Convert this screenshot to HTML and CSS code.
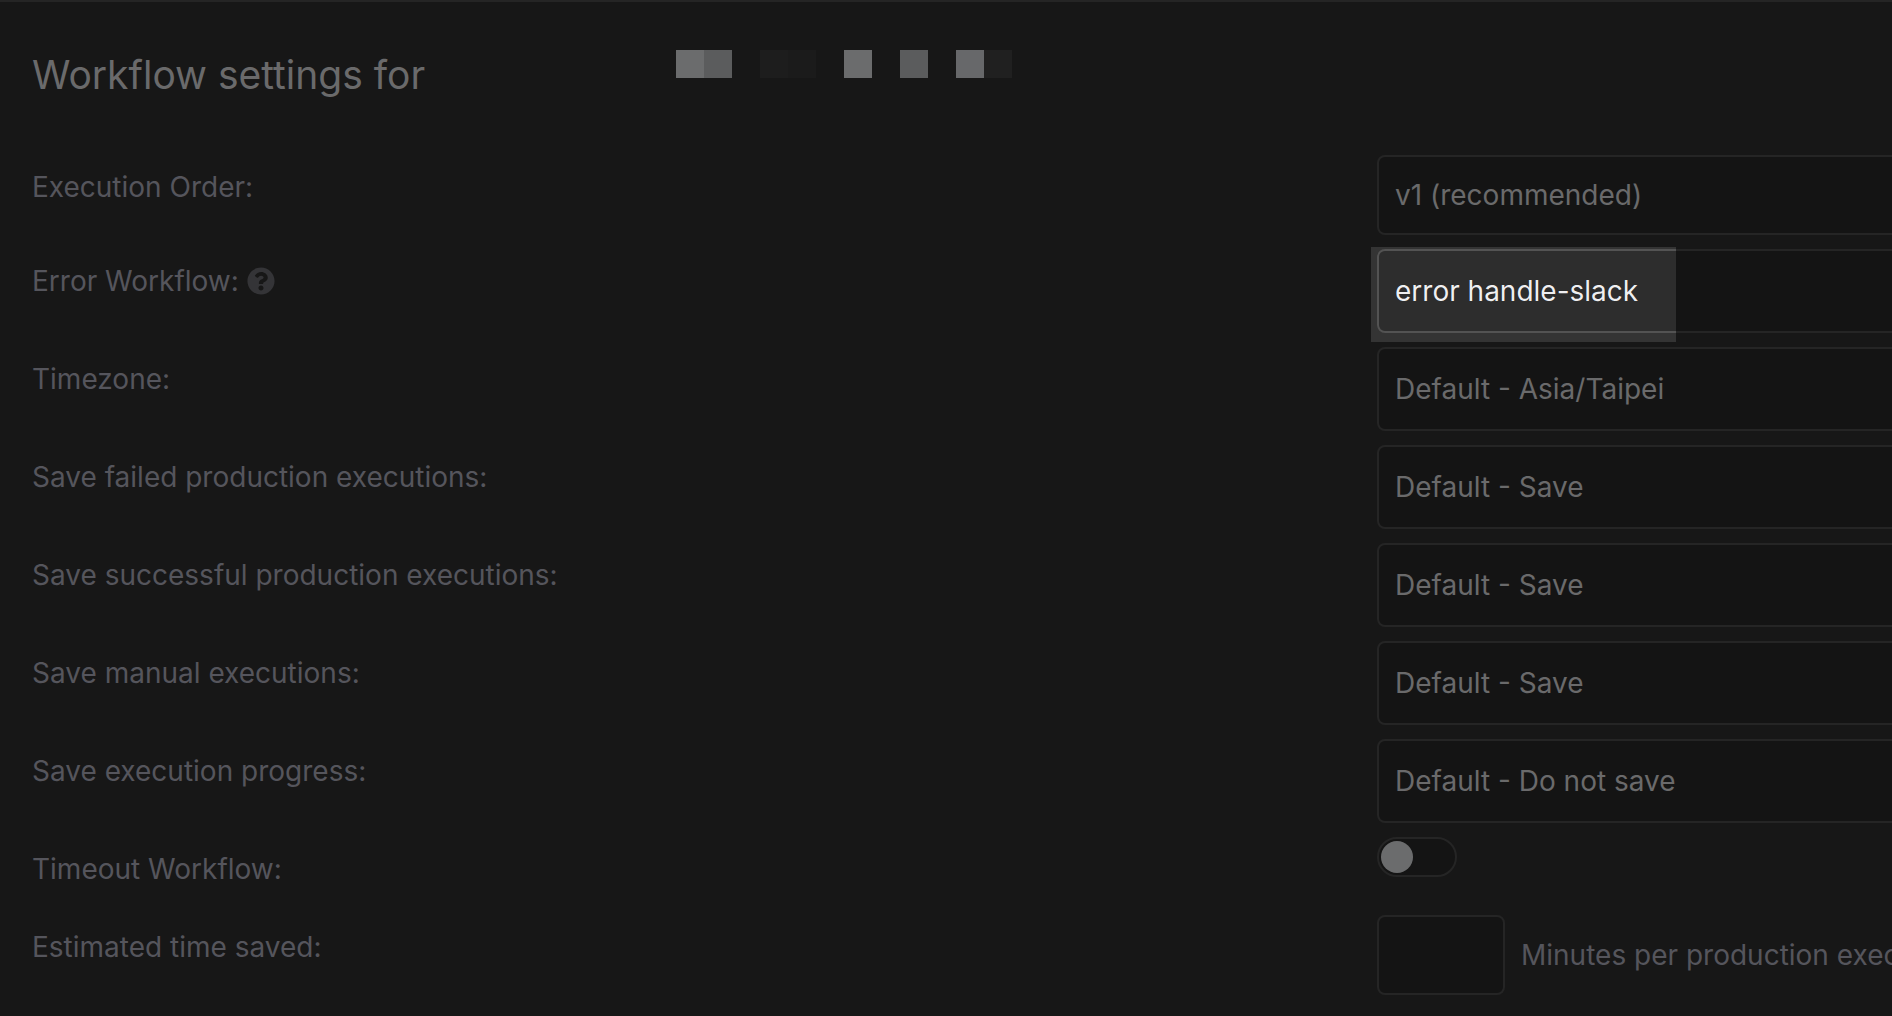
FILE: index.html
```html
<!DOCTYPE html>
<html lang="en">
<head>
    <meta charset="UTF-8">
    <meta name="viewport" content="width=device-width, initial-scale=1.0">
    <title>Workflow settings</title>
    <link rel="stylesheet" href="styles.css">
</head>
<body>
    <main class="dialog">
        <header class="dialog-header">
            <h1>Workflow settings for</h1>
            <!-- workflow name, redacted -->
            <div class="redacted" aria-hidden="true">
                <span class="tile tile-a"></span>
                <span class="tile tile-b"></span>
                <span class="tile"></span>
                <span class="tile tile-e"></span>
                <span class="tile tile-f"></span>
                <span class="tile"></span>
                <span class="tile tile-a"></span>
                <span class="tile"></span>
                <span class="tile tile-b"></span>
                <span class="tile"></span>
                <span class="tile tile-c"></span>
                <span class="tile tile-d"></span>
            </div>
        </header>

        <form class="settings">
            <div class="row">
                <label for="execution-order">Execution Order:</label>
                <select id="execution-order">
                    <option>v1 (recommended)</option>
                </select>
            </div>

            <div class="row">
                <div class="label-group">
                    <label for="error-workflow">Error Workflow:</label>
                    <svg class="help-icon" viewBox="0 0 512 512" aria-hidden="true">
                        <path d="M504 256c0 137-111 248-248 248S8 393 8 256 119 8 256 8s248 111 248 248zM262.700 90c-54.500 0-89.300 23-116.500 63.800-3.500 5.300-2.400 12.400 2.700 16.300l34.700 26.300c5.200 3.900 12.600 3 16.700-2.100 17.900-22.700 30.100-35.800 57.300-35.800 20.400 0 45.700 13.100 45.700 33 0 15-12.400 22.700-32.500 34C247.100 238.500 216 254.900 216 296v4c0 6.600 5.400 12 12 12h56c6.600 0 12-5.400 12-12v-1.300c0-28.500 83.200-29.600 83.200-106.700 0-58-60.200-102-116.500-102zM256 338c-25.400 0-46 20.600-46 46 0 25.400 20.600 46 46 46s46-20.600 46-46c0-25.400-20.600-46-46-46z"/>
                    </svg>
                </div>
                <div class="field">
                    <select id="error-workflow" class="tall">
                        <option>error handle-slack</option>
                    </select>
                    <div class="spotlight"></div>
                </div>
            </div>

            <div class="row">
                <label for="timezone">Timezone:</label>
                <select id="timezone" class="tall">
                    <option>Default - Asia/Taipei</option>
                </select>
            </div>

            <div class="row">
                <label for="save-failed">Save failed production executions:</label>
                <select id="save-failed" class="tall">
                    <option>Default - Save</option>
                </select>
            </div>

            <div class="row">
                <label for="save-successful">Save successful production executions:</label>
                <select id="save-successful" class="tall">
                    <option>Default - Save</option>
                </select>
            </div>

            <div class="row">
                <label for="save-manual">Save manual executions:</label>
                <select id="save-manual" class="tall">
                    <option>Default - Save</option>
                </select>
            </div>

            <div class="row">
                <label for="save-progress">Save execution progress:</label>
                <select id="save-progress" class="tall">
                    <option>Default - Do not save</option>
                </select>
            </div>

            <div class="row row-switch">
                <label for="timeout">Timeout Workflow:</label>
                <input type="checkbox" role="switch" class="switch" id="timeout">
            </div>

            <div class="row">
                <label for="time-saved">Estimated time saved:</label>
                <div class="time-saved">
                    <input type="text" inputmode="numeric" id="time-saved">
                    <span>Minutes per production execution</span>
                </div>
            </div>
        </form>
    </main>
</body>
</html>
```
FILE: styles.css
```css
:root {
    --background: #171717;
    --field: #141414;
    --border: #252525;
    --text: #6a6a6b;
    --label: #55555c;
}

* {
    box-sizing: border-box;
}

body {
    margin: 0;
    background: var(--background);
    color: var(--text);
    font-family: Inter, sans-serif;
    font-size: 28px;
    line-height: 36px;
}

.dialog {
    min-height: 100vh;
    padding: 48px 0 20px 32px;
    border-top: 2px solid var(--border);
    overflow: hidden;
}

.dialog-header {
    display: flex;
    align-items: flex-start;
    gap: 251px;
    margin-bottom: 55px;
}

h1 {
    margin: 0;
    font-size: 39px;
    font-weight: 400;
    line-height: 50px;
}

.redacted {
    display: flex;
}

.tile {
    width: 28px;
    height: 28px;
}

.tile-a { background: #6b6c6d; }
.tile-b { background: #5b5c5d; }
.tile-c { background: #67686a; }
.tile-d { background: #202020; }
.tile-e { background: #1d1d1d; }
.tile-f { background: #1b1b1b; }

.settings {
    display: flex;
    flex-direction: column;
    gap: 14px;
}

.row {
    display: grid;
    grid-template-columns: 1fr 515px;
    align-items: start;
}

.row-switch {
    min-height: 64px;
}

label {
    padding-top: 14px;
    color: var(--label);
}

.label-group {
    display: flex;
    align-items: flex-end;
    gap: 8px;
}

.help-icon {
    width: 28px;
    height: 28px;
    margin-bottom: 4px;
    fill: #343437;
}

select,
input {
    margin: 0;
    border: 2px solid var(--border);
    border-radius: 8px;
    background: var(--field);
    color: var(--text);
    font: inherit;
    appearance: none;
    outline: none;
}

/* the fields run on past the right edge of the dialog */
select {
    width: calc(100% + 20px);
    height: 80px;
    padding: 0 16px;
}

.tall {
    height: 84px;
}

.field {
    position: relative;
    display: flex;
}

.field select {
    flex: none;
}

.spotlight {
    position: absolute;
    top: -2px;
    left: -6px;
    width: 305px;
    height: 95px;
    backdrop-filter: brightness(2.25);
    pointer-events: none;
}

.switch {
    display: flex;
    align-items: center;
    width: 80px;
    height: 40px;
    padding: 2px;
    border-radius: 20px;
}

.switch::before {
    content: "";
    width: 32px;
    height: 32px;
    border-radius: 50%;
    background: #6b6c6d;
}

.switch:checked {
    justify-content: flex-end;
}

.time-saved {
    display: flex;
    align-items: center;
    gap: 16px;
    color: var(--label);
    white-space: nowrap;
}

.time-saved input {
    flex: none;
    width: 128px;
    height: 80px;
    padding: 0 16px;
}
```
